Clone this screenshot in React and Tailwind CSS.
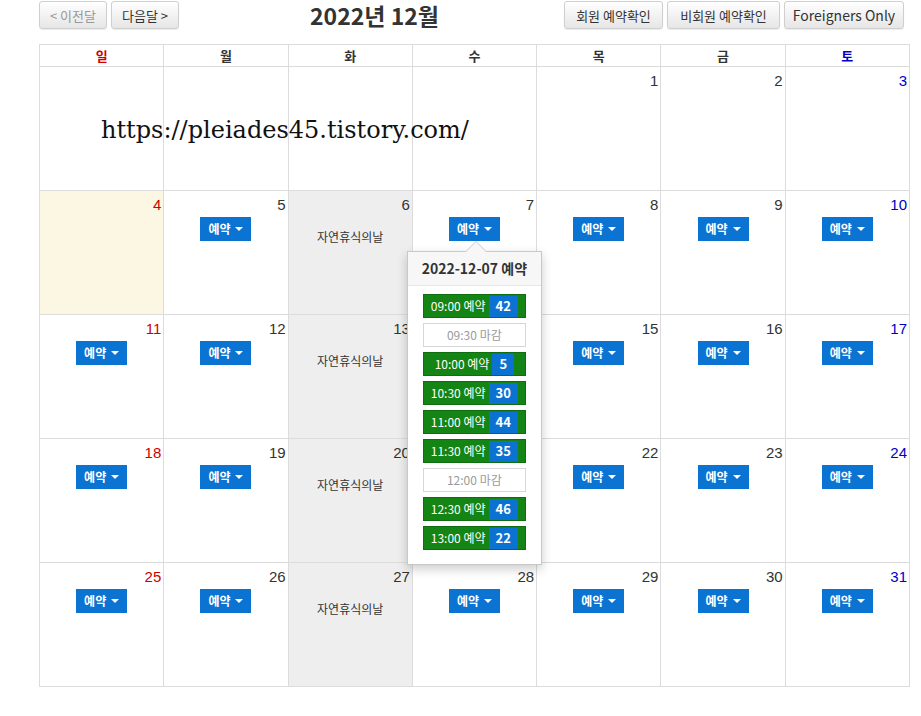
import React from 'react'

const FONT = { fontFamily: '"Noto Sans CJK KR", "Liberation Sans", sans-serif' }
const NUM_FONT = { fontFamily: '"Liberation Sans", "Noto Sans CJK KR", sans-serif' }

const DAYS = ['일', '월', '화', '수', '목', '금', '토']
const HOLIDAYS = [6, 13, 20, 27]
const NO_BUTTON = [1, 2, 3, 4]

const SLOTS = [
  { time: '09:00', count: 42 },
  { time: '09:30', closed: true },
  { time: '10:00', count: 5 },
  { time: '10:30', count: 30 },
  { time: '11:00', count: 44 },
  { time: '11:30', count: 35 },
  { time: '12:00', closed: true },
  { time: '12:30', count: 46 },
  { time: '13:00', count: 22 },
]

function buildWeeks() {
  // 2022-12-01 is a Thursday
  const cells = [null, null, null, null]
  for (let d = 1; d <= 31; d++) cells.push(d)
  const weeks = []
  for (let i = 0; i < cells.length; i += 7) weeks.push(cells.slice(i, i + 7))
  return weeks
}

function TopButton({ children, className = '', disabled }) {
  return (
    <button
      className={`h-[28px] rounded-[3px] border border-[#cfcfcf] bg-gradient-to-b from-white to-[#e6e6e6] text-[13px] leading-none shadow-[0_1px_1px_rgba(0,0,0,0.08)] ${
        disabled ? 'text-[#999]' : 'text-[#333]'
      } ${className}`}
    >
      {children}
    </button>
  )
}

function ReserveButton() {
  return (
    <div className="flex h-[24px] w-[51px] items-center justify-center gap-[5px] bg-[#0b74d2] text-[12px] font-bold text-white">
      <span>예약</span>
      <span className="h-0 w-0 border-x-[4px] border-t-[4px] border-x-transparent border-t-white" />
    </div>
  )
}

function Popover() {
  return (
    <div className="absolute left-[-6px] top-[60px] z-20 w-[135px] border border-[#c8c8c8] bg-white shadow-[0_4px_10px_rgba(0,0,0,0.2)]">
      <div className="absolute left-[57px] top-[-11px] h-0 w-0 border-x-[11px] border-b-[11px] border-x-transparent border-b-[#c8c8c8]" />
      <div className="absolute left-[58px] top-[-10px] h-0 w-0 border-x-[10px] border-b-[10px] border-x-transparent border-b-[#f7f7f7]" />
      <div className="flex h-[34px] items-center justify-center border-b border-[#e8e8e8] bg-[#f7f7f7] text-[14px] font-bold text-[#333]">
        2022-12-07 예약
      </div>
      <div className="flex flex-col gap-[5px] px-[15px] pb-[14px] pt-[8px]">
        {SLOTS.map((s) =>
          s.closed ? (
            <div
              key={s.time}
              className="flex h-[24px] items-center justify-center border border-[#d6d6d6] bg-white text-[12px] text-[#9a9a9a]"
            >
              {s.time} 마감
            </div>
          ) : (
            <div
              key={s.time}
              className="flex h-[24px] items-center justify-center gap-[3px] border border-[#0f6e0f] bg-[#148414] text-[12px] text-white"
            >
              <span>{s.time} 예약</span>
              <span className="flex h-[21px] min-w-[21px] items-center justify-center bg-[#0b72d2] px-[7px] text-[13px] font-bold">
                {s.count}
              </span>
            </div>
          )
        )}
      </div>
    </div>
  )
}

function DayCell({ day, col }) {
  if (day == null) return <div className="h-[124px] border-b border-r border-[#dcdcdc]" />
  const holiday = HOLIDAYS.includes(day)
  const today = day === 4
  const color = col === 0 ? 'text-[#d00000]' : col === 6 ? 'text-[#0000c8]' : 'text-[#333]'
  const bg = today ? 'bg-[#fcf7e3]' : holiday ? 'bg-[#eeeeee]' : 'bg-white'
  return (
    <div className={`relative flex h-[124px] flex-col items-center border-b border-r border-[#dcdcdc] ${bg}`}>
      <div className={`w-full pr-[2px] pt-[4px] text-right text-[15px] leading-[20px] ${color}`} style={NUM_FONT}>
        {day}
      </div>
      {holiday ? (
        <div className="mt-[13px] text-[12px] text-[#333]">자연휴식의날</div>
      ) : !NO_BUTTON.includes(day) ? (
        <div className="mt-[2px]">
          <ReserveButton />
        </div>
      ) : null}
      {day === 7 && <Popover />}
    </div>
  )
}

export default function App() {
  const weeks = buildWeeks()
  return (
    <div className="h-[716px] w-[921px] bg-white" style={FONT}>
      <div className="ml-[39px] flex h-[29px] w-[865px] items-center pt-[1px]">
        <div className="flex gap-[4px]">
          <TopButton disabled className="w-[68px]">
            &lt; 이전달
          </TopButton>
          <TopButton className="w-[68px]">다음달 &gt;</TopButton>
        </div>
        <div className="ml-[131px] text-[23px] font-bold leading-[34px] text-[#333]">2022년 12월</div>
        <div className="ml-auto flex gap-[4px]">
          <TopButton className="w-[99px]">회원 예약확인</TopButton>
          <TopButton className="w-[113px]">비회원 예약확인</TopButton>
          <TopButton className="w-[120px] text-[14px]">Foreigners Only</TopButton>
        </div>
      </div>

      <div className="relative ml-[39px] mt-[15px] w-[871px] border-l border-t border-[#dcdcdc]">
        <div className="grid grid-cols-7">
          {DAYS.map((d, i) => (
            <div
              key={d}
              className={`flex h-[22px] items-center justify-center border-b border-r border-[#dcdcdc] text-[13px] font-bold ${
                i === 0 ? 'text-[#d00000]' : i === 6 ? 'text-[#0000c8]' : 'text-[#333]'
              }`}
            >
              {d}
            </div>
          ))}
        </div>
        {weeks.map((w, wi) => (
          <div key={wi} className="grid grid-cols-7">
            {w.map((day, ci) => (
              <DayCell key={ci} day={day} col={ci} />
            ))}
          </div>
        ))}
        <div
          className="pointer-events-none absolute left-[61px] top-[67px] z-10 text-[24px] text-[#111]"
          style={{ fontFamily: '"DejaVu Serif", "Liberation Serif", serif' }}
        >
          https://pleiades45.tistory.com/
        </div>
      </div>
    </div>
  )
}
